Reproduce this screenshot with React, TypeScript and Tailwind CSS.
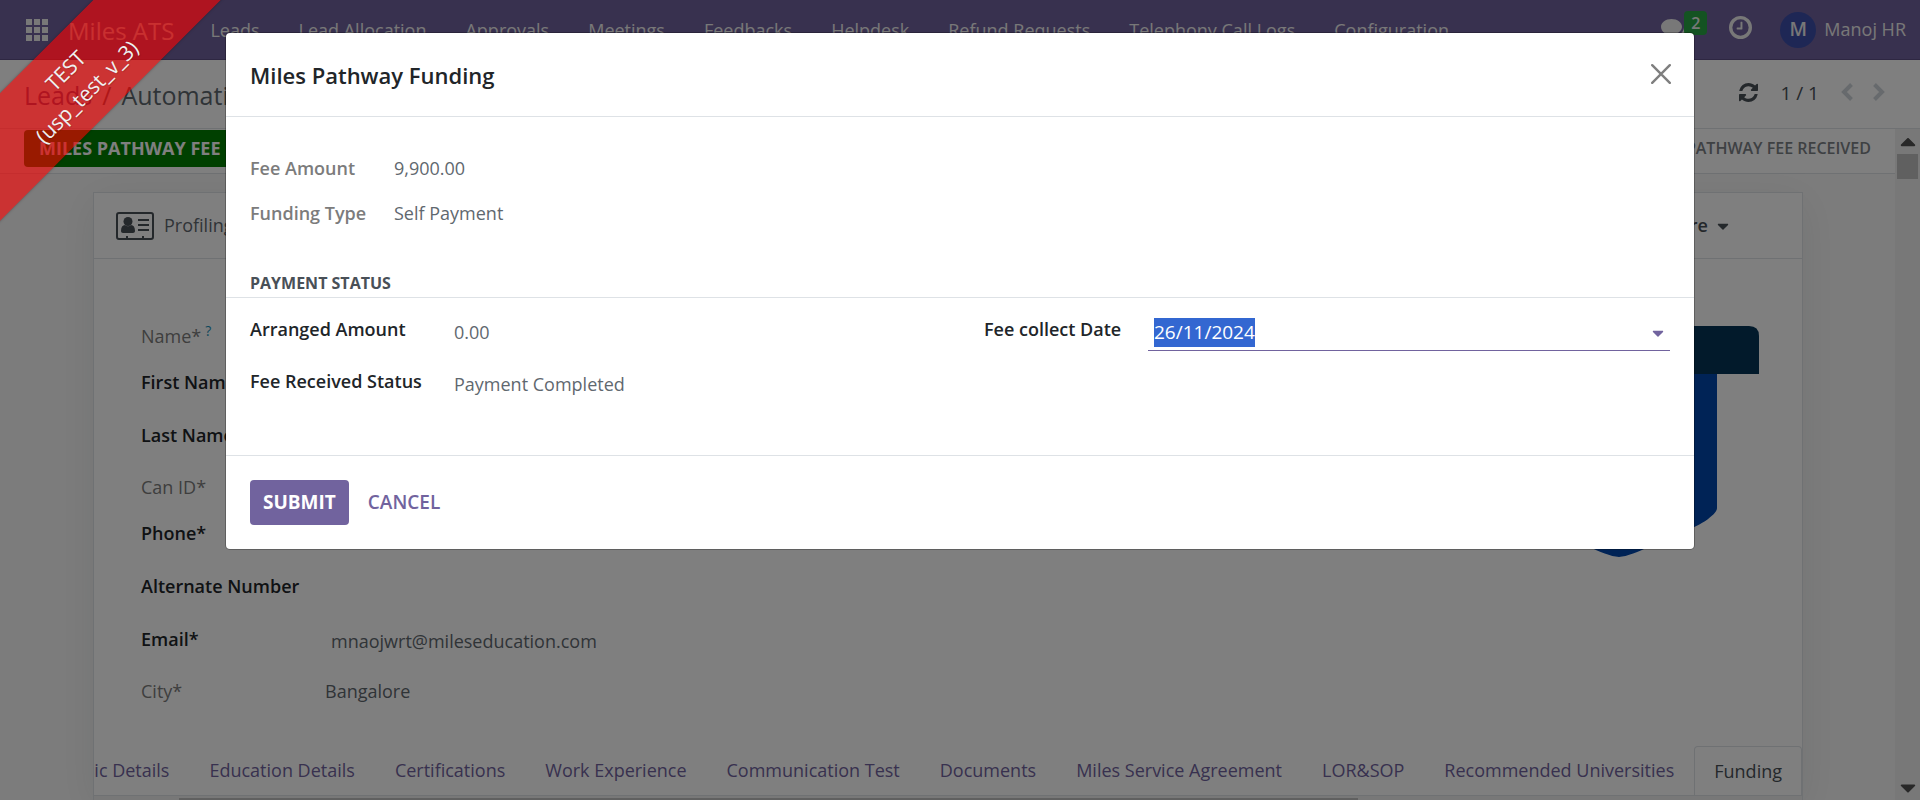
import { useEffect, useRef } from "react";
import { FaCaretDown, FaCaretUp } from "react-icons/fa";

const menus = [
  "Leads",
  "Lead Allocation",
  "Approvals",
  "Meetings",
  "Feedbacks",
  "Helpdesk",
  "Refund Requests",
  "Telephony Call Logs",
  "Configuration",
];

const tabs = [
  "Basic Details",
  "Education Details",
  "Certifications",
  "Work Experience",
  "Communication Test",
  "Documents",
  "Miles Service Agreement",
  "LOR&SOP",
  "Recommended Universities",
];

function AppsIcon() {
  return (
    <svg className="size-[22px]" viewBox="0 0 22 22" fill="currentColor">
      {[0, 8, 16].map((y) =>
        [0, 8, 16].map((x) => <rect key={`${x}-${y}`} x={x} y={y} width="6" height="6" />),
      )}
    </svg>
  );
}

function CardIcon() {
  return (
    <svg className="h-7 w-[38px]" viewBox="0 0 38 28" fill="#495057">
      <rect x="1" y="1" width="36" height="26" rx="2" fill="none" stroke="#495057" strokeWidth="2" />
      <circle cx="12" cy="9.500" r="4.500" />
      <path d="M5 19c0-4 1.500-6 4-6 2 1.600 4 1.600 6 0 2.500 0 4 2 4 6 0 1.300-.8 2-2 2H7c-1.200 0-2-.7-2-2z" />
      <path d="M22 7h11v2H22zM22 12h11v2H22zM22 17h11v2H22zM10 24h2v3h-2zM26 24h2v3h-2z" />
    </svg>
  );
}

function ChatIcon() {
  return (
    <svg className="h-[22px] w-[27px]" viewBox="0 0 27 22" fill="currentColor">
      <path d="M10.500 0C16.300 0 21 3.500 21 7.800s-4.700 7.700-10.500 7.700c-1 0-2-.1-3-.3C6 16.700 4 17.700 1 17.700c1.500-1.200 2.300-2.300 2.500-3.700C1.300 12.500 0 10.300 0 7.800 0 3.500 4.700 0 10.500 0z" />
      <path d="M23 4.500C25.700 6 27 8 27 10.500c0 2.500-1.300 4.500-3.200 6 .3 1.500 1 2.500 2.200 3.800-2.600-.1-4.600-1-6.300-2.300-3 .6-6 .3-8.500-.7 7.500 0 13-4.200 11.800-12.800z" />
    </svg>
  );
}

function ClockIcon() {
  return (
    <svg className="size-[23px]" viewBox="0 128 1536 1536" fill="currentColor">
      <circle cx="768" cy="896" r="656" fill="none" stroke="currentColor" strokeWidth="224" />
      <path d="M896 544v448q0 14-9 23t-23 9H544q-14 0-23-9t-9-23v-64q0-14 9-23t23-9h224V544q0-14 9-23t23-9h64q14 0 23 9t9 23z" />
    </svg>
  );
}

function RefreshIcon() {
  return (
    <svg className="size-[19px]" viewBox="0 128 1536 1536" fill="currentColor">
      <path d="M1511 1056q0 5-1 7-64 268-268 434.500T764 1664q-146 0-282.500-55T238 1452l-129 129q-19 19-45 19t-45-19-19-45v-448q0-26 19-45t45-19h448q26 0 45 19t19 45-19 45l-137 137q71 66 161 102t187 36q134 0 250-65t186-179q11-17 53-117 8-23 30-23h192q13 0 22.500 9.500t9.500 22.500zm25-800v448q0 26-19 45t-45 19h-448q-26 0-45-19t-19-45 19-45l138-138Q969 384 768 384q-134 0-250 65T332 628q-11 17-53 117-8 23-30 23H50q-13 0-22.500-9.500T18 736v-7q65-268 270-434.500T768 128q146 0 284 55.500T1297 340l130-129q19-19 45-19t45 19 19 45z" />
    </svg>
  );
}

function Chevron({ d }: { d: string }) {
  return (
    <svg className="h-[18px] w-3" viewBox="0 0 12 18" fill="none" stroke="currentColor" strokeWidth="4">
      <path d={d} />
    </svg>
  );
}

function Navbar() {
  return (
    <header className="flex h-[60px] shrink-0 items-center border-b border-[#5c4f85] bg-[#71639e] pr-3.5 pl-[26px] whitespace-nowrap text-[#f0f0f0]">
      <button aria-label="Applications">
        <AppsIcon />
      </button>
      <span className="ml-5 pt-0.5 text-[24px]">Miles ATS</span>
      <nav className="ml-9 flex flex-1 gap-[39px] pt-0.5 text-[18px]">
        {menus.map((m) => (
          <a key={m} href="#">
            {m}
          </a>
        ))}
      </nav>
      <button aria-label="Messages" className="relative mr-[37px] pr-1">
        <ChatIcon />
        <span className="absolute -top-2 left-[23px] flex h-6 w-[23px] items-center justify-center rounded-sm bg-[#28a745] text-[16px] font-semibold">
          2
        </span>
      </button>
      <button aria-label="Activities" className="mr-7 pb-1">
        <ClockIcon />
      </button>
      <button className="flex items-center gap-2">
        <span className="flex size-9 items-center justify-center rounded-full bg-[#3c4fab] text-[19px] font-semibold">M</span>
        <span className="text-[18px]">Manoj HR</span>
      </button>
    </header>
  );
}

function ControlPanel() {
  return (
    <div className="flex h-[69px] shrink-0 items-center justify-between border-b border-[#dee2e6] bg-white pr-[35px] pl-6">
      <div className="flex gap-2.5 pt-[3px] text-[25px] text-[#6c757d]">
        <a href="#" className="text-[#71639e]">
          Leads
        </a>
        <span>/</span>
        <span className="text-[#5f686f]">Automation</span>
      </div>
      <div className="flex items-center pb-1 text-[#495057]">
        <button aria-label="Refresh" className="mr-[22px]">
          <RefreshIcon />
        </button>
        <span className="mr-[22px] pt-0.5 text-[19px]">1 / 1</span>
        <button aria-label="Previous" className="mr-5 text-[#ced4da]">
          <Chevron d="M10.500 1.500L3 9L10.500 16.500" />
        </button>
        <button aria-label="Next" className="text-[#ced4da]">
          <Chevron d="M1.500 1.500L9 9L1.500 16.500" />
        </button>
      </div>
    </div>
  );
}

function Row({ label, value, strong, className }: { label: string; value?: string; strong?: boolean; className: string }) {
  return (
    <div className={`flex h-7 items-center ${className}`}>
      <dt className={strong ? "w-[184px] font-semibold whitespace-nowrap text-[#212529]" : "w-[184px] text-[#7c7c7c]"}>
        {label}
        {label === "Name*" && <sup className="ml-1 text-[14px] text-[#1b90b8]">?</sup>}
      </dt>
      <dd className={strong ? "pt-1 pl-1.5 text-[#5f686f]" : "text-[#5f686f]"}>{value}</dd>
    </div>
  );
}

function Shield() {
  return (
    <svg className="mt-[8px] h-[232px] w-[280px]" viewBox="0 0 280 232">
      <path d="M42 48H238V182C238 189 218 202 202 206C186 212 156 230 140 231C124 230 94 212 78 206C62 202 42 189 42 182Z" fill="#0046ac" />
      <path d="M0 48V10Q0 0 10 0H270Q280 0 280 10V48Z" fill="#043456" />
    </svg>
  );
}

function Sheet() {
  return (
    <main className="flex min-w-0 flex-1 flex-col bg-[#f9f9f9]">
      <div className="flex h-[45px] shrink-0 justify-between border-b border-[#dee2e6] bg-white px-6">
        <button className="mt-px flex h-[37px] w-[240px] items-center rounded-sm bg-[#008000] pl-[15px] text-[18px] font-bold whitespace-nowrap text-white">
          MILES PATHWAY FEE
        </button>
        <span className="pt-1 text-[16px] leading-[30px] font-semibold text-[#7c8287]">MILES PATHWAY FEE RECEIVED</span>
      </div>
      <section className="mt-[18px] mr-[92px] ml-[93px] flex flex-1 flex-col border border-b-0 border-[#dee2e6] bg-white text-[18px] shadow-[0_8px_40px_rgba(0,40,40,0.08)]">
        <div className="flex h-[66px] shrink-0 items-center justify-between border-b border-[#dee2e6] pr-[70px] pl-[22px]">
          <button className="flex items-center gap-2.5 text-[#5f686f]">
            <CardIcon />
            Profiling
          </button>
          <button className="flex items-center gap-1.5 font-semibold text-[#495057]">
            More
            <FaCaretDown className="size-[18px]" />
          </button>
        </div>
        <div className="flex justify-between pt-[59px] pr-[43px] pl-[47px]">
          <dl>
            <Row label="Name*" className="mt-1" />
            <Row label="First Name*" strong className="mt-[18px]" />
            <Row label="Last Name*" strong className="mt-[25px]" />
            <Row label="Can ID*" className="mt-6" />
            <Row label="Phone*" strong className="mt-[18px]" />
            <Row label="Alternate Number" strong className="mt-[25px]" />
            <Row label="Email*" value="mnaojwrt@mileseducation.com" strong className="mt-[25px]" />
            <Row label="City*" value="Bangalore" className="mt-6" />
          </dl>
          <Shield />
        </div>
        <div className="mt-auto flex justify-end overflow-hidden border-b border-[#dee2e6] whitespace-nowrap text-[#71639e]">
          {tabs.map((t) => (
            <a key={t} href="#" className="flex h-[49px] items-center px-5">
              {t}
            </a>
          ))}
          <a href="#" className="-mb-px flex h-[49px] items-center rounded-t-sm border border-b-0 border-[#dee2e6] px-[19px] text-[#495057]">
            Funding
          </a>
        </div>
        <div className="h-[4px] bg-[#f1f1f1] pt-0.5">
          <div className="ml-[5%] h-0.5 w-[69%] bg-[#c1c1c1]" />
        </div>
      </section>
    </main>
  );
}

function Scrollbar() {
  return (
    <div className="flex w-[25px] flex-col items-center justify-between bg-[#f1f1f1] text-[#505050]">
      <div className="flex w-full flex-col items-center px-0.5">
        <FaCaretUp className="h-[25px] w-[18px]" />
        <div className="h-[25px] w-full bg-[#c1c1c1]" />
      </div>
      <FaCaretDown className="h-[25px] w-[18px]" />
    </div>
  );
}

function FundingDialog() {
  const dateRef = useRef<HTMLInputElement>(null);
  useEffect(() => {
    dateRef.current?.focus();
    dateRef.current?.select();
  }, []);

  return (
    <div
      role="dialog"
      aria-labelledby="dialog-title"
      className="mx-auto mt-[33px] w-full max-w-[1468px] rounded-[4px] bg-white text-[18px] leading-[29px] text-[#5f686f] shadow-[0_0_0_1px_rgba(0,0,0,0.25)]"
    >
      <div className="flex h-[84px] items-center justify-between border-b border-[#dee2e6] pr-[23px] pl-6">
        <h1 id="dialog-title" className="pt-0.5 text-[22px] font-semibold text-[#212529]">
          Miles Pathway Funding
        </h1>
        <button aria-label="Close" className="pb-0.5 text-[#7f7f7f]">
          <svg className="size-5" viewBox="0 0 20 20" stroke="currentColor" strokeWidth="2.400" strokeLinecap="round">
            <path d="M1.200 1.200L18.800 18.800M18.800 1.200L1.200 18.800" />
          </svg>
        </button>
      </div>
      <div className="pt-[37px] pb-[56px]">
        <dl className="grid grid-cols-[144px_1fr] gap-y-4 px-6">
          <dt className="font-semibold text-[#7c7c7c]">Fee Amount</dt>
          <dd>9,900.00</dd>
          <dt className="font-semibold text-[#7c7c7c]">Funding Type</dt>
          <dd>Self Payment</dd>
        </dl>
        <h2 className="mt-[41px] border-b border-[#dee2e6] px-6 text-[16px] leading-[28px] font-bold text-[#495057]">PAYMENT STATUS</h2>
        <div className="grid grid-cols-2 px-6 pt-[17px]">
          <dl className="grid grid-cols-[204px_1fr] gap-y-5">
            <dt className="font-semibold text-[#212529]">Arranged Amount</dt>
            <dd className="pt-[3px]">0.00</dd>
            <dt className="font-semibold text-[#212529]">Fee Received Status</dt>
            <dd className="pt-[3px]">Payment Completed</dd>
          </dl>
          <div className="flex items-start pl-6">
            <label htmlFor="fee-date" className="w-[164px] font-semibold text-[#212529]">
              Fee collect Date
            </label>
            <div className="mt-[3px] flex flex-1 items-center border-b border-[#71639e] pr-[3px] pb-[3px] pl-1.5">
              <input
                id="fee-date"
                ref={dateRef}
                defaultValue="26/11/2024"
                className="h-[29px] min-w-0 flex-1 text-[19px] outline-none selection:bg-[#3367d1] selection:text-white"
              />
              <FaCaretDown className="size-[18px] text-[#71639e]" />
            </div>
          </div>
        </div>
      </div>
      <div className="flex items-center gap-[19px] border-t border-[#dee2e6] px-6 py-6 text-[19px]">
        <button className="h-[45px] rounded-[4px] bg-[#71639e] px-[13px] font-bold text-white">SUBMIT</button>
        <button className="font-semibold text-[#71639e]">CANCEL</button>
      </div>
    </div>
  );
}

export default function App() {
  return (
    <div className="relative flex h-screen flex-col overflow-hidden font-['Open_Sans','Noto_Sans',sans-serif]">
      <Navbar />
      <ControlPanel />
      <div className="flex min-h-0 flex-1">
        <Sheet />
        <Scrollbar />
      </div>
      <div className="absolute inset-0 bg-black/50">
        <FundingDialog />
      </div>
      <div className="pointer-events-none absolute top-[36px] -left-[99px] w-[350px] -rotate-45 bg-[#ff0000]/60 py-[15px] text-center text-[21px] leading-[30px] font-medium text-[#f0f0f0] shadow-[0_0_3px_rgba(0,0,0,0.3)] text-shadow-xs">
        TEST
        <br />
        (usp_test_v_3)
      </div>
    </div>
  );
}
